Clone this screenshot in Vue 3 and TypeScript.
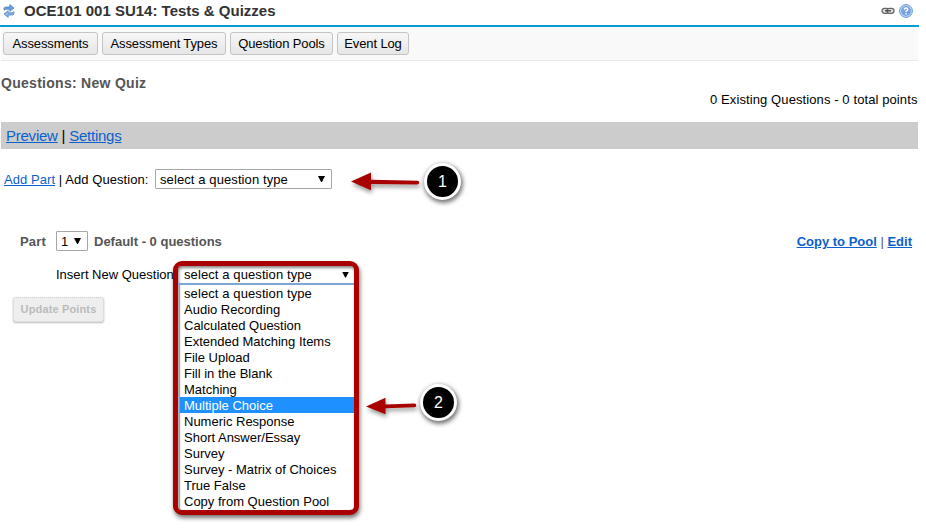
<script setup lang="ts">
import { ref } from 'vue'

const tabs: { label: string; width: number }[] = [
  { label: 'Assessments', width: 95 },
  { label: 'Assessment Types', width: 124 },
  { label: 'Question Pools', width: 103 },
  { label: 'Event Log', width: 72 },
]

const questionTypes: string[] = [
  'select a question type',
  'Audio Recording',
  'Calculated Question',
  'Extended Matching Items',
  'File Upload',
  'Fill in the Blank',
  'Matching',
  'Multiple Choice',
  'Numeric Response',
  'Short Answer/Essay',
  'Survey',
  'Survey - Matrix of Choices',
  'True False',
  'Copy from Question Pool',
]

const highlighted = ref('Multiple Choice')
</script>

<template>
  <div class="page">
    <header class="title-bar">
      <svg class="refresh" width="12" height="14" viewBox="0 0 12 14">
        <path d="M1 6.2V4.6Q1 3 2.8 3H6.8V.6L11 4.1 6.8 7.3V5.2H3.4Q2.4 5.2 1 6.2Z" fill="#6fa3dc" stroke="#3d74b5" stroke-width=".7" />
        <path d="M11 7.8v1.6Q11 11 9.2 11H5.2v2.4L1 9.9 5.2 6.7v2.1h3.4q1 0 2.4-1Z" fill="#8dbbe9" stroke="#3d74b5" stroke-width=".7" />
      </svg>
      <h1>OCE101 001 SU14: Tests &amp; Quizzes</h1>
      <svg class="chain" width="14" height="8" viewBox="0 0 14 8">
        <rect x="1" y="1.3" width="7" height="5" rx="2.5" fill="#ddd" stroke="#666" stroke-width="1.3" />
        <rect x="6" y="1.3" width="7" height="5" rx="2.5" fill="#ddd" stroke="#666" stroke-width="1.3" />
        <path d="M4 3.8h6" stroke="#444" stroke-width="1.3" />
      </svg>
      <svg class="help" width="14" height="14" viewBox="0 0 14 14">
        <circle cx="7" cy="7" r="6.4" fill="#c3daf5" stroke="#6497d8" />
        <circle cx="7" cy="7" r="4.9" fill="#73a4e1" />
        <path d="M5.2 5.6Q5.3 4 7 4t1.8 1.5Q8.8 6.4 7 7.3v.8M7 9.1v1.4" fill="none" stroke="#fff" stroke-width="1.4" />
      </svg>
    </header>

    <nav class="toolbar">
      <button v-for="tab in tabs" :key="tab.label" class="tab" :style="{ width: tab.width + 'px' }">{{ tab.label }}</button>
    </nav>

    <h2>Questions: New Quiz</h2>
    <p class="totals">0 Existing Questions - 0 total points</p>

    <div class="action-bar"><a>Preview</a> | <a>Settings</a></div>

    <div class="add-row">
      <span class="add-label"><a>Add Part</a> | Add Question:</span>
      <div class="select wide"><span>select a question type</span><i class="caret"></i></div>
    </div>

    <div class="part-row">
      <b class="part">Part</b>
      <div class="select number"><span>1</span><i class="caret"></i></div>
      <b class="default">Default - 0 questions</b>
      <span class="part-links"><a>Copy to Pool</a> | <a>Edit</a></span>
    </div>

    <div class="insert-row">
      <span class="insert-label">Insert New Question</span>
      <div class="menu-frame">
        <div class="menu-head"><span>select a question type</span><i class="caret"></i></div>
        <ul class="menu">
          <li v-for="type in questionTypes" :key="type" :class="{ active: type === highlighted }">{{ type }}</li>
        </ul>
      </div>
    </div>

    <button class="update" disabled>Update Points</button>

    <svg class="arrow first" width="74" height="28" viewBox="0 0 74 28">
      <path d="M1 11.5 21 2.5V9.7L67.4 10.8a1.8 1.8 0 0 1 0 3.6L21 13.9v6.4Z" fill="#a90000" />
    </svg>
    <div class="badge one">1</div>
    <svg class="arrow second" width="58" height="28" viewBox="0 0 58 28">
      <path d="M1 11.5 20.5 2.7v6.7L49.5 8.6a1.8 1.8 0 0 1 0 3.6L20.5 13.3v6Z" fill="#a90000" />
    </svg>
    <div class="badge two">2</div>
  </div>
</template>

<style>
body {
  margin: 0;
  background: #fff;
}
</style>

<style scoped>
.page {
  position: relative;
  width: 926px;
  height: 532px;
  overflow: hidden;
  background: #fff;
  color: #000;
  font: 13px/16px "Liberation Sans", Arial, sans-serif;
}
h1, h2, p, ul {
  margin: 0;
  padding: 0;
}
a {
  color: #0b61cc;
  text-decoration: underline;
}
.title-bar {
  box-sizing: border-box;
  display: flex;
  align-items: center;
  width: 919px;
  height: 27px;
  padding: 0 6px 4px 3px;
  border-bottom: 2px solid #069dd5;
}
h1 {
  margin-left: 9px;
  color: #333;
  font-size: 15px;
  line-height: 20px;
}
.chain {
  margin-left: auto;
}
.help {
  margin-left: 4px;
}
.toolbar {
  box-sizing: border-box;
  display: flex;
  gap: 4px;
  width: 917px;
  height: 34px;
  margin-left: 1px;
  padding: 5px 2px;
  border-bottom: 1px solid #e8e8e8;
  background: #f9f9f9;
}
.tab {
  box-sizing: border-box;
  height: 23px;
  padding: 0;
  border: 1px solid #c4c4c4;
  border-radius: 3px;
  background: linear-gradient(#f7f7f7, #e6e6e6);
  color: #000;
  font: 13px/20px "Liberation Sans", Arial, sans-serif;
  letter-spacing: -0.12px;
  white-space: nowrap;
}
h2 {
  margin: 14px 0 0 1px;
  color: #555;
  font-size: 14px;
  line-height: 16px;
  letter-spacing: 0.28px;
}
.totals {
  width: 917.5px;
  margin-top: 1px;
  text-align: right;
  letter-spacing: 0.1px;
}
.action-bar {
  box-sizing: border-box;
  width: 917px;
  height: 27px;
  margin: 14px 0 0 1px;
  padding-left: 5px;
  background: #ccc;
  font-size: 15px;
  line-height: 27px;
  letter-spacing: -0.24px;
}
.add-row {
  display: flex;
  align-items: center;
  height: 20px;
  margin: 20px 0 0 4px;
}
.add-label {
  width: 151px;
  padding-top: 2px;
  letter-spacing: 0.07px;
}
.select {
  box-sizing: border-box;
  display: flex;
  align-items: center;
  justify-content: space-between;
  height: 20px;
  padding: 0 6px 0 4px;
  border: 1px solid #a6a6a6;
  border-radius: 1px;
  background: #fff;
  letter-spacing: 0.1px;
}
.select span {
  padding-top: 2px;
}
.wide {
  width: 177px;
}
.number {
  width: 32px;
}
.caret {
  width: 7px;
  height: 6px;
  background: #000;
  clip-path: polygon(0 0, 100% 0, 56% 100%, 44% 100%);
}
.part-row {
  display: flex;
  align-items: center;
  width: 892px;
  height: 20px;
  margin: 42px 0 0 20px;
  color: #555;
}
.part {
  width: 36px;
  padding-top: 2px;
  letter-spacing: 0.2px;
}
.part-row .select {
  color: #000;
}
.default {
  margin-left: 6px;
  padding-top: 2px;
}
.part-links {
  margin-left: auto;
  padding-top: 2px;
}
.part-links a {
  font-weight: bold;
}
.insert-row {
  position: relative;
  height: 16px;
  margin: 15px 0 0 56px;
}
.insert-label {
  line-height: 18px;
}
.menu-frame {
  position: absolute;
  box-sizing: border-box;
  top: -5px;
  left: 117px;
  width: 186px;
  height: 254px;
  border: 5px solid #a90000;
  border-radius: 9px;
  background: #fff;
  box-shadow: 1px 3px 4px #0008, inset 1px 2px 3px #0007;
}
.menu-head {
  display: flex;
  align-items: center;
  justify-content: space-between;
  height: 17px;
  padding: 0 5px 0 6px;
  border-bottom: 2px solid #7da6d4;
  letter-spacing: 0.1px;
}
.menu {
  margin-left: 1px;
  border-left: 1px solid #7da6d4;
  list-style: none;
}
.menu li {
  height: 16px;
  padding-left: 4px;
  line-height: 18px;
}
.menu li:first-child {
  letter-spacing: 0.1px;
}
.menu .active {
  background: #1e90ff;
  color: #fff;
}
.update {
  box-sizing: border-box;
  display: block;
  width: 91px;
  height: 25px;
  margin: 15px 0 0 13px;
  padding: 0 0 2px;
  border: 1px dotted #ccc;
  border-radius: 3px;
  background: #eee;
  box-shadow: 0 1px 2px #bbb;
  color: #bbb;
  font: bold 11px/20px "Liberation Sans", Arial, sans-serif;
  letter-spacing: 0.15px;
}
.arrow {
  position: absolute;
  filter: drop-shadow(1px 3px 2px #0006);
}
.first {
  left: 350px;
  top: 170px;
}
.second {
  left: 365px;
  top: 395px;
}
.badge {
  position: absolute;
  box-sizing: border-box;
  width: 37px;
  height: 37px;
  border: 3px solid #fff;
  border-radius: 50%;
  background: #000;
  box-shadow: 1px 2px 4px 1px #0008;
  color: #fff;
  font-size: 16px;
  line-height: 31px;
  text-align: center;
}
.one {
  left: 424px;
  top: 163px;
}
.two {
  left: 420px;
  top: 384px;
}
</style>
